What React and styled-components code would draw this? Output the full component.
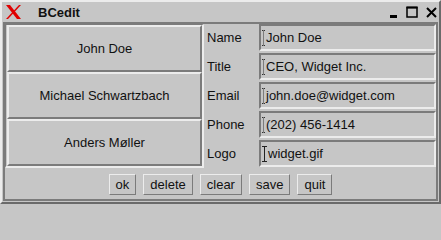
import styled, { createGlobalStyle } from "styled-components";

const GRAY = "#c6c6c6";
const DARK = "#7b7b7b";
const LIGHT = "#ececec";

const GlobalStyle = createGlobalStyle`
  html, body {
    margin: 0;
    padding: 0;
    background: ${GRAY};
  }
  * {
    box-sizing: border-box;
  }
`;

const Window = styled.div`
  width: 441px;
  height: 204px;
  display: flex;
  flex-direction: column;
  background: ${GRAY};
  border-style: solid;
  border-width: 2px;
  border-color: ${LIGHT} #6a6a6a #6a6a6a ${LIGHT};
  font-family: "Liberation Sans", Arial, sans-serif;
  font-size: 13px;
  color: #111;
`;

const TitleBar = styled.div`
  height: 20px;
  display: flex;
  align-items: center;
  padding: 0 2px 0 3px;
`;

const Title = styled.span`
  font-weight: bold;
  font-size: 13px;
  margin-left: 16px;
  margin-top: 1px;
  flex: 1;
`;

const Controls = styled.div`
  display: flex;
  align-items: center;
  gap: 8px;
`;

const Frame = styled.div`
  flex: 1;
  margin: 0 1px 1px 1px;
  border: 2px solid ${DARK};
  display: flex;
  flex-direction: column;
`;

const Main = styled.div`
  display: flex;
  height: 144px;
`;

const List = styled.div`
  width: 199px;
  display: flex;
  flex-direction: column;
  padding: 0 0 0 1px;
  border-style: solid;
  border-width: 1px 2px 2px 1px;
  border-color: ${DARK} ${LIGHT} ${LIGHT} ${DARK};
`;

const Entry = styled.button`
  height: 47px;
  width: 100%;
  font: inherit;
  color: inherit;
  background: ${GRAY};
  border-style: solid;
  border-width: 2px;
  border-color: ${LIGHT} ${DARK} ${DARK} ${LIGHT};
  padding: 0;
  cursor: pointer;
`;

const Fields = styled.div`
  flex: 1;
  display: flex;
  flex-direction: column;
  gap: 2px;
`;

const Row = styled.div`
  display: flex;
  height: 27px;
  align-items: center;
`;

const Label = styled.span`
  width: 55px;
  padding-left: 3px;
`;

const Field = styled.div`
  flex: 1;
  height: 27px;
  display: flex;
  align-items: center;
  padding-left: 1px;
  border-style: solid;
  border-width: 2px;
  border-color: ${DARK} ${LIGHT} ${LIGHT} ${DARK};
  white-space: nowrap;
  overflow: hidden;
`;

const Value = styled.span`
  margin-left: ${(p) => (p.$focused ? 1 : 0)}px;
`;

const ButtonBar = styled.div`
  flex: 1;
  display: flex;
  justify-content: center;
  align-items: center;
  gap: 7px;
  padding-top: 1px;
`;

const Action = styled.button`
  height: 21px;
  font: inherit;
  font-size: 13px;
  color: inherit;
  background: ${GRAY};
  border-style: solid;
  border-width: 1px;
  border-color: ${LIGHT} ${DARK} ${DARK} ${LIGHT};
  padding: 0 6px;
  cursor: pointer;
`;

const XLogo = () => (
  <svg width="17" height="14" viewBox="0 0 17 14">
    <path d="M1 0 L5 0 L16 14 L12 14 Z" fill="#e00000" />
    <path d="M14 0 L16 0 L3 14 L1 14 Z" fill="#e00000" />
  </svg>
);

const Minimize = () => (
  <svg width="8" height="12" viewBox="0 0 8 12">
    <rect x="0" y="9" width="7" height="3" fill="#000" />
  </svg>
);

const Maximize = () => (
  <svg width="12" height="12" viewBox="0 0 12 12">
    <rect x="1" y="1.5" width="10" height="9.5" fill="none" stroke="#000" strokeWidth="1.5" />
    <rect x="0.5" y="0.5" width="11" height="2" fill="#000" />
  </svg>
);

const Close = () => (
  <svg width="11" height="12" viewBox="0 0 11 12">
    <path d="M1 2 L10 11 M10 2 L1 11" stroke="#000" strokeWidth="2" />
  </svg>
);

const Caret = ({ solid }) => (
  <svg width={solid ? 5 : 4} height="16" viewBox={solid ? "0 0 5 16" : "0 0 4 16"}>
    {solid ? (
      <path d="M0 0.5 H5 M2.5 0.5 V15.5 M0 15.5 H5" stroke="#222" strokeWidth="1" fill="none" />
    ) : (
      <path
        d="M0 0.5 H3 M1.5 0.5 V15.5 M0 15.5 H3"
        stroke="#333"
        strokeWidth="1"
        strokeDasharray="1 1"
        fill="none"
      />
    )}
  </svg>
);

const people = ["John Doe", "Michael Schwartzbach", "Anders Møller"];

const record = [
  ["Name", "John Doe"],
  ["Title", "CEO, Widget Inc."],
  ["Email", "john.doe@widget.com"],
  ["Phone", "(202) 456-1414"],
  ["Logo", "widget.gif"],
];

const actions = ["ok", "delete", "clear", "save", "quit"];

export default function App() {
  return (
    <>
      <GlobalStyle />
      <Window>
        <TitleBar>
          <XLogo />
          <Title>BCedit</Title>
          <Controls>
            <Minimize />
            <Maximize />
            <Close />
          </Controls>
        </TitleBar>
        <Frame>
          <Main>
            <List>
              {people.map((name) => (
                <Entry key={name}>{name}</Entry>
              ))}
            </List>
            <Fields>
              {record.map(([label, value]) => {
                const focused = label === "Logo";
                return (
                  <Row key={label}>
                    <Label>{label}</Label>
                    <Field>
                      <Caret solid={focused} />
                      <Value $focused={focused}>{value}</Value>
                    </Field>
                  </Row>
                );
              })}
            </Fields>
          </Main>
          <ButtonBar>
            {actions.map((a) => (
              <Action key={a}>{a}</Action>
            ))}
          </ButtonBar>
        </Frame>
      </Window>
    </>
  );
}
